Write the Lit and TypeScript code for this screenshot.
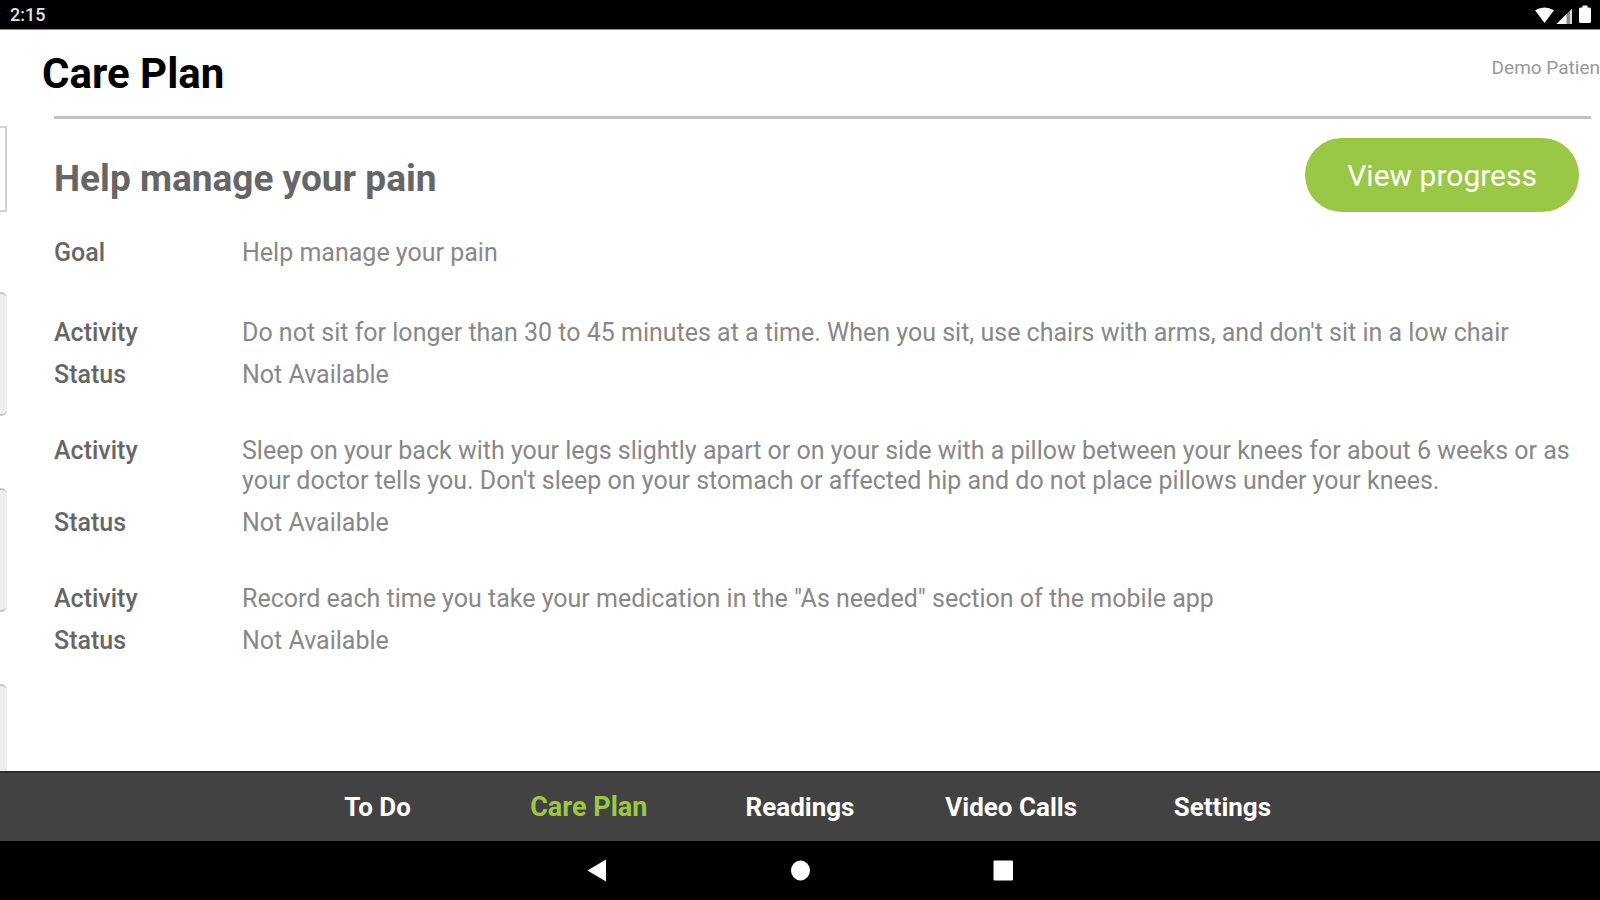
import { LitElement, html, css } from "lit";
import { customElement, property, state } from "lit/decorators.js";

interface Activity {
  text: string;
  status: string;
}

const ACTIVITIES: Activity[] = [
  {
    text: "Do not sit for longer than 30 to 45 minutes at a time. When you sit, use chairs with arms, and don't sit in a low chair",
    status: "Not Available",
  },
  {
    text: "Sleep on your back with your legs slightly apart or on your side with a pillow between your knees for about 6 weeks or as your doctor tells you. Don't sleep on your stomach or affected hip and do not place pillows under your knees.",
    status: "Not Available",
  },
  {
    text: 'Record each time you take your medication in the "As needed" section of the mobile app',
    status: "Not Available",
  },
];

const TABS = ["To Do", "Care Plan", "Readings", "Video Calls", "Settings"];

@customElement("status-bar")
export class StatusBar extends LitElement {
  static styles = css`
    :host {
      display: flex;
      align-items: center;
      justify-content: space-between;
      box-sizing: border-box;
      height: 30px;
      padding: 0 8px 0 10px;
      background: #000;
      border-bottom: 1px solid #8a8a8a;
      color: #e4e4e4;
      font-size: 18px;
      font-weight: 500;
      line-height: 28px;
    }
    .icons {
      display: block;
    }
  `;

  render() {
    return html`
      <span>2:15</span>
      <svg class="icons" width="57" height="20" viewBox="0 0 57 20" fill="#fff" aria-hidden="true">
        <path d="M0 5.200 Q9.500 -0.400 19 5.200 L9.500 18 Z" />
        <path d="M21.500 19 L37 3.500 V19 Z" fill="#8c8c8c" />
        <path d="M21.500 19 L31.500 9 V19 Z" />
        <path d="M35 6 L37 4 V19 H35 Z" fill="#d8d8d8" />
        <path d="M47.500 0.500 H52.500 V2.500 H54.500 Q56 2.500 56 4 V16.500 Q56 18 54.500 18 H45.500 Q44 18 44 16.500 V4 Q44 2.500 45.500 2.500 H47.500 Z" />
      </svg>
    `;
  }
}

@customElement("plan-detail")
export class PlanDetail extends LitElement {
  @property({ attribute: false }) activities: Activity[] = [];

  static styles = css`
    :host {
      display: block;
      border-top: 3px solid #c2c2c2;
      color: #666;
    }
    .head {
      display: flex;
      align-items: flex-start;
      justify-content: space-between;
      padding: 19px 12px 18px 0;
    }
    .title {
      margin: 0;
      font-size: 37px;
      line-height: 82px;
      font-weight: 700;
    }
    .progress {
      height: 74px;
      padding: 0 42px;
      border: 0;
      border-radius: 37px;
      background: #9bc746;
      color: #fff;
      font-family: inherit;
      font-size: 30px;
      font-weight: 400;
    }
    .rows {
      display: grid;
      grid-template-columns: 188px 1fr;
      row-gap: 12px;
      margin: 0 0 46px;
      padding-right: 12px;
      font-size: 25px;
      line-height: 30px;
    }
    .goal {
      margin-bottom: 50px;
    }
    .label {
      font-weight: 500;
    }
    .value {
      margin: 0;
      color: #888;
    }
  `;

  render() {
    return html`
      <div class="head">
        <h2 class="title">Help manage your pain</h2>
        <button class="progress" type="button">View progress</button>
      </div>
      <dl class="rows goal">
        <dt class="label">Goal</dt>
        <dd class="value">Help manage your pain</dd>
      </dl>
      ${this.activities.map(
        (a) => html`
          <dl class="rows">
            <dt class="label">Activity</dt>
            <dd class="value">${a.text}</dd>
            <dt class="label">Status</dt>
            <dd class="value">${a.status}</dd>
          </dl>
        `
      )}
    `;
  }
}

@customElement("tab-bar")
export class TabBar extends LitElement {
  @state() private current = "Care Plan";

  static styles = css`
    :host {
      display: block;
      background: #424242;
      border-top: 2px solid #2c2c2c;
    }
    .tabs {
      display: grid;
      grid-template-columns: repeat(5, 1fr);
      width: 66%;
      margin: 0 auto;
    }
    .tab {
      color: #fff;
      font-size: 26px;
      font-weight: 700;
      line-height: 68px;
      text-align: center;
      text-decoration: none;
      white-space: nowrap;
    }
    .tab[aria-current="page"] {
      color: #9bc746;
      font-size: 27px;
    }
  `;

  private select(e: Event, tab: string) {
    e.preventDefault();
    this.current = tab;
  }

  render() {
    return html`
      <nav class="tabs">
        ${TABS.map(
          (t) => html`<a
            class="tab"
            href="#"
            aria-current=${t === this.current ? "page" : "false"}
            @click=${(e: Event) => this.select(e, t)}
            >${t}</a
          >`
        )}
      </nav>
    `;
  }
}

@customElement("system-bar")
export class SystemBar extends LitElement {
  static styles = css`
    :host {
      display: flex;
      align-items: center;
      justify-content: center;
      gap: 179px;
      height: 59px;
      background: #000;
    }
    .key {
      display: block;
      padding: 0;
      border: 0;
      background: none;
    }
    .glyph {
      display: block;
    }
  `;

  render() {
    return html`
      <button class="key" type="button" aria-label="Back">
        <svg class="glyph" width="24" height="24" viewBox="0 0 24 24" fill="#fff">
          <path d="M2.500 11.500 L21 0.500 V22.500 Z" />
        </svg>
      </button>
      <button class="key" type="button" aria-label="Home">
        <svg class="glyph" width="24" height="24" viewBox="0 0 24 24" fill="#fff">
          <ellipse cx="12.500" cy="11.500" rx="9.500" ry="10" />
        </svg>
      </button>
      <button class="key" type="button" aria-label="Overview">
        <svg class="glyph" width="24" height="24" viewBox="0 0 24 24" fill="#fff">
          <rect x="2.500" y="1.500" width="19.500" height="20" rx="1" />
        </svg>
      </button>
    `;
  }
}

@customElement("app-root")
export class AppRoot extends LitElement {
  static styles = css`
    :host {
      display: flex;
      flex-direction: column;
      height: 100vh;
      overflow: hidden;
      background: #fff;
      font-family: Roboto, "Liberation Sans", sans-serif;
    }
    .header {
      display: flex;
      justify-content: space-between;
      padding: 19px 0 17px 42px;
    }
    .title {
      margin: 0;
      color: #000;
      font-size: 42px;
      line-height: 50px;
      font-weight: 700;
    }
    .patient {
      color: #999;
      font-size: 19px;
      line-height: 38px;
      white-space: nowrap;
    }
    .body {
      flex: 1;
      display: flex;
      min-height: 0;
      overflow: hidden;
    }
    .list {
      flex: none;
      display: flex;
      flex-direction: column;
      gap: 72px;
      width: 7px;
      padding-top: 10px;
      margin-right: 47px;
    }
    .filter {
      flex: none;
      box-sizing: border-box;
      height: 86px;
      margin-bottom: 8px;
      border: solid #d2d2d2;
      border-width: 2px 2px 2px 0;
    }
    .card {
      flex: none;
      box-sizing: border-box;
      height: 124px;
      border: solid #c4c4c4;
      border-width: 2px 0;
      border-radius: 0 6px 6px 0;
      background: #ededed;
    }
    .detail {
      flex: 1;
      min-width: 0;
      margin-right: 9px;
    }
  `;

  render() {
    return html`
      <status-bar></status-bar>
      <header class="header">
        <h1 class="title">Care Plan</h1>
        <span class="patient">Demo Patien</span>
      </header>
      <main class="body">
        <div class="list">
          <div class="filter"></div>
          <div class="card"></div>
          <div class="card"></div>
          <div class="card"></div>
        </div>
        <plan-detail class="detail" .activities=${ACTIVITIES}></plan-detail>
      </main>
      <tab-bar></tab-bar>
      <system-bar></system-bar>
    `;
  }
}
